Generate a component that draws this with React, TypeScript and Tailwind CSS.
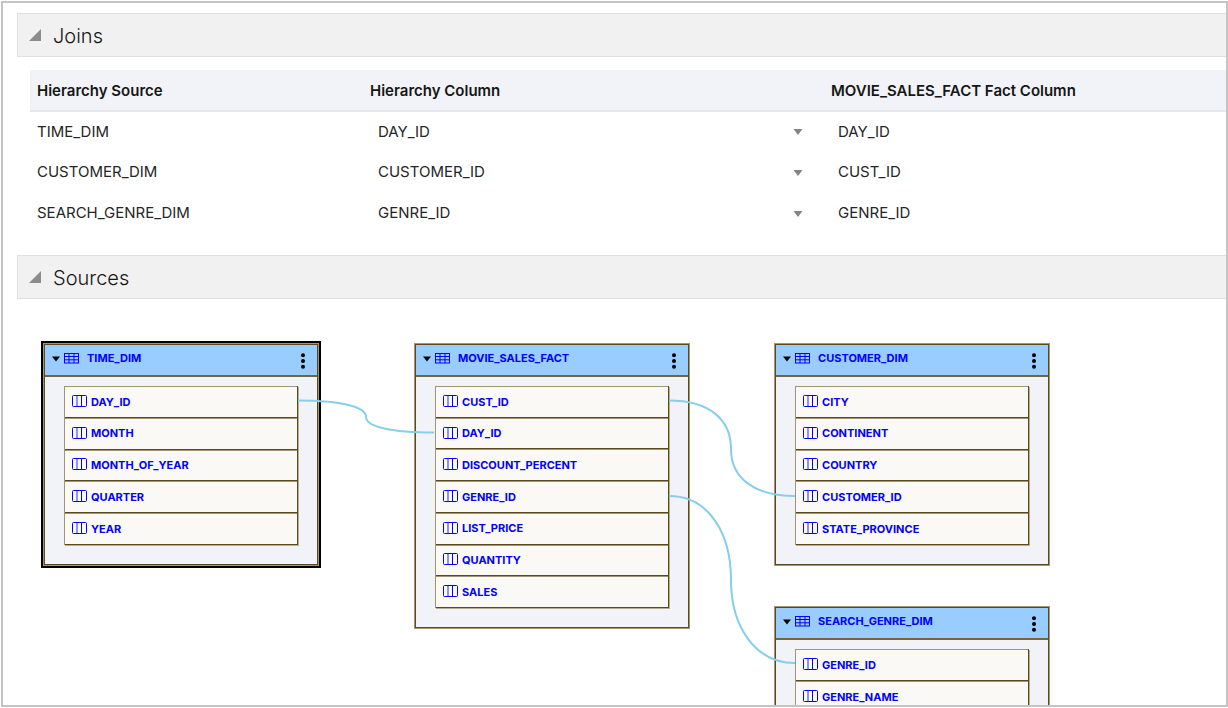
import React from "react";

type Join = { source: string; column: string; fact: string };

const joins: Join[] = [
  { source: "TIME_DIM", column: "DAY_ID", fact: "DAY_ID" },
  { source: "CUSTOMER_DIM", column: "CUSTOMER_ID", fact: "CUST_ID" },
  { source: "SEARCH_GENRE_DIM", column: "GENRE_ID", fact: "GENRE_ID" },
];

type SourceTable = {
  name: string;
  columns: string[];
  place: string;
  selected?: boolean;
};

const sources: SourceTable[] = [
  {
    name: "TIME_DIM",
    columns: ["DAY_ID", "MONTH", "MONTH_OF_YEAR", "QUARTER", "YEAR"],
    place: "left-[41px] top-[45px] h-[221px]",
    selected: true,
  },
  {
    name: "MOVIE_SALES_FACT",
    columns: ["CUST_ID", "DAY_ID", "DISCOUNT_PERCENT", "GENRE_ID", "LIST_PRICE", "QUANTITY", "SALES"],
    place: "left-[412px] top-[45px] h-[284px]",
  },
  {
    name: "CUSTOMER_DIM",
    columns: ["CITY", "CONTINENT", "COUNTRY", "CUSTOMER_ID", "STATE_PROVINCE"],
    place: "left-[772px] top-[45px] h-[221px]",
  },
  {
    name: "SEARCH_GENRE_DIM",
    columns: ["GENRE_ID", "GENRE_NAME"],
    place: "left-[772px] top-[308px] h-[126px]",
  },
];

function TableIcon() {
  return (
    <svg className="h-[11px] w-[15px]" viewBox="0 0 15 11" fill="none" stroke="#0000ff" aria-hidden="true">
      <rect x="0.5" y="0.5" width="14" height="9.5" strokeWidth="1" />
      <path d="M0.5 3.5H14.5M0.5 6.8H14.5M5 0.5V10M10 0.5V10" strokeWidth="1" />
    </svg>
  );
}

function ColumnIcon() {
  return (
    <svg className="mb-0.5 h-3 w-[15px] shrink-0" viewBox="0 0 15 12" fill="none" stroke="#0000ff" aria-hidden="true">
      <rect x="0.5" y="0.5" width="14" height="11" rx="1" strokeWidth="1" />
      <path d="M5 0.5V11.5" strokeWidth="1.4" strokeOpacity="0.6" />
      <path d="M9.5 0.5V11.5" strokeWidth="1" />
    </svg>
  );
}

function SectionHeader({ title }: { title: string }) {
  return (
    <h2>
      <button
        type="button"
        aria-expanded="true"
        className="flex h-11 w-full items-center gap-3 border border-r-0 border-[#e0e0e0] bg-[#f1f1f1] pl-[11px] text-left text-xl font-light text-[#161616]"
      >
        <svg className="size-3" viewBox="0 0 12 12" aria-hidden="true">
          <path d="M12 0V12H0Z" fill="#8c8c8c" />
        </svg>
        <span className="pt-0.5">{title}</span>
      </button>
    </h2>
  );
}

function JoinsTable() {
  return (
    <table className="w-full table-fixed border-collapse text-left text-[15px] text-[#262626]">
      <thead>
        <tr className="h-[41px] border-b-2 border-[#e3e8ee] bg-[#f2f3f8] text-[#161616]">
          <th className="w-[333px] px-[7px] pt-0.5 font-semibold">Hierarchy Source</th>
          <th className="w-[461px] px-[7px] pt-0.5 font-semibold">Hierarchy Column</th>
          <th className="px-[7px] pt-0.5 font-semibold">MOVIE_SALES_FACT Fact Column</th>
        </tr>
      </thead>
      <tbody>
        {joins.map((j) => (
          <tr key={j.source} className="h-[41px]">
            <td className="px-[7px]">{j.source}</td>
            <td className="p-0">
              <div className="relative pl-[15px] pr-5">
                <select
                  aria-label={"Hierarchy column for " + j.source}
                  defaultValue={j.column}
                  className="block w-full appearance-none bg-transparent"
                >
                  <option>{j.column}</option>
                </select>
                <svg
                  className="pointer-events-none absolute right-[21px] top-1/2 h-[7px] w-[10px] -translate-y-1/2"
                  viewBox="0 0 10 7"
                  aria-hidden="true"
                >
                  <path d="M0.5 0.5H9.5L5 6.5Z" fill="#858585" />
                </svg>
              </div>
            </td>
            <td className="px-[14px]">{j.fact}</td>
          </tr>
        ))}
      </tbody>
    </table>
  );
}

function SourceCard({ source }: { source: SourceTable }) {
  return (
    <section
      className={
        "absolute flex w-[274px] flex-col border border-[#5c4a1c] bg-[#f2f3f8] text-[11px] font-bold text-[#0000ff] ring-1 ring-[#a09676] " +
        source.place +
        (source.selected ? " outline-2 outline-offset-1 outline-black" : "")
      }
    >
      <header className="flex h-8 items-center border-b-2 border-[#75663a] bg-[#99ccff] pl-[7px] pr-[11px]">
        <button type="button" aria-expanded="true" className="flex items-center gap-1 pb-[3px]">
          <svg className="h-[6px] w-2" viewBox="0 0 8 6" aria-hidden="true">
            <path d="M0 0.5H8L4 5.5Z" fill="#000" />
          </svg>
          <TableIcon />
          <span className="pl-1">{source.name}</span>
        </button>
        <button type="button" aria-label={"Actions for " + source.name} className="ml-auto pt-0.5">
          <svg className="h-4 w-[6px]" viewBox="0 0 6 16" aria-hidden="true">
            <circle cx="3" cy="2.3" r="2" />
            <circle cx="3" cy="8" r="2" />
            <circle cx="3" cy="13.7" r="2" />
          </svg>
        </button>
      </header>
      <div className="flex grow px-[19px] pb-[19px] pt-[9px]">
        <ul className="flex grow flex-col border-x border-l-[#a09676] border-r-[#5c4a1c] shadow-[1px_1px_0_#b5ac92]">
          {source.columns.map((c) => (
            <li
              key={c}
              className="flex min-h-0 flex-1 items-center gap-1 border-b border-t border-b-[#5c4a1c] border-t-[#a09676] bg-[#faf9f6] pl-[7px]"
            >
              <ColumnIcon />
              {c}
            </li>
          ))}
        </ul>
      </div>
    </section>
  );
}

function Connectors() {
  return (
    <svg
      className="pointer-events-none absolute left-0 top-0 h-[406px] w-[800px]"
      viewBox="3 299 800 406"
      fill="none"
      stroke="#87ceeb"
      strokeWidth="2"
      aria-hidden="true"
    >
      <path d="M298 400.5C342 400.5 366 407 366 417S392 432.5 434 432.5" />
      <path d="M669 400.5C710 400.5 731 420 731 449S754 496 795 496" />
      <path d="M669 496C710 496 731 535 731 580S754 663 795 663" />
    </svg>
  );
}

export default function App() {
  return (
    <div className="h-screen bg-white py-px pl-px font-['Inter',sans-serif]">
      <main className="flex h-full flex-col overflow-hidden border-2 border-[#c4c4c4] pt-[10px]">
        <div className="pl-[14px]">
          <SectionHeader title="Joins" />
          <div className="pb-[21px] pl-[13px] pt-[13px]">
            <JoinsTable />
          </div>
          <SectionHeader title="Sources" />
        </div>
        <div className="relative grow">
          {sources.map((s) => (
            <SourceCard key={s.name} source={s} />
          ))}
          <Connectors />
        </div>
      </main>
    </div>
  );
}
